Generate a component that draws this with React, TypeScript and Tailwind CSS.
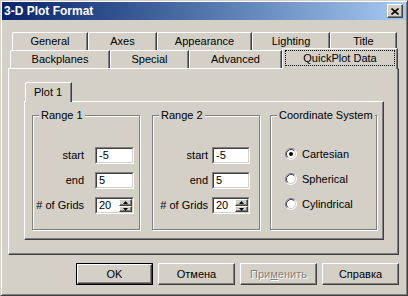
import type { ReactNode } from 'react'

const raised =
  'border border-t-white border-l-white border-r-[#404040] border-b-[#404040] shadow-[inset_-1px_-1px_0_#808080]'

const Tab = ({ label, width }: { label: string; width: number }) => (
  <div
    className="flex h-[18px] items-center justify-center rounded-tl-[2px] border-t border-l border-r border-t-white border-l-white border-r-[#404040] shadow-[inset_-1px_0_0_#808080]"
    style={{ width }}
  >
    {label}
  </div>
)

const Edit = ({ value, width, spin }: { value: string; width: number; spin?: boolean }) => (
  <div
    className="h-[17px] border border-t-[#808080] border-l-[#808080] border-b-white border-r-white"
    style={{ width }}
  >
    <div className="flex h-full items-center border border-t-[#404040] border-l-[#404040] border-b-[#d4d0c8] border-r-[#d4d0c8] bg-white">
      <span className="flex-1 pl-[2px] leading-none">{value}</span>
      {spin ? (
        <div className="flex h-full w-[13px] flex-col">
          <div className={`flex h-[7px] items-center justify-center bg-[#d4d0c8] ${raised}`}>
            <svg width="5" height="3" viewBox="0 0 5 3">
              <path d="M2.5 0 L5 3 L0 3 Z" fill="#000" />
            </svg>
          </div>
          <div className={`flex h-[6px] items-center justify-center bg-[#d4d0c8] ${raised}`}>
            <svg width="5" height="3" viewBox="0 0 5 3">
              <path d="M0 0 L5 0 L2.5 3 Z" fill="#000" />
            </svg>
          </div>
        </div>
      ) : null}
    </div>
  </div>
)

const Group = ({
  title,
  width,
  className,
  children,
}: {
  title: string
  width: number
  className?: string
  children: ReactNode
}) => (
  <div
    className={`relative h-[115px] border border-[#808080] shadow-[inset_1px_1px_0_#fff,1px_1px_0_#fff] ${className ?? ''}`}
    style={{ width }}
  >
    <span className="absolute left-[6px] top-[-8px] bg-[#d4d0c8] px-[2px] leading-[14px]">{title}</span>
    {children}
  </div>
)

const RangeFields = ({ labelCol, gap, inputWidth }: { labelCol: number; gap: number; inputWidth: number }) => (
  <div
    className="grid gap-y-[8px] pt-[31px]"
    style={{ gridTemplateColumns: `${labelCol}px ${inputWidth}px`, columnGap: gap }}
  >
    <span className="self-center text-right">start</span>
    <Edit value="-5" width={inputWidth} />
    <span className="self-center text-right">end</span>
    <Edit value="5" width={inputWidth} />
    <span className="self-center text-right whitespace-nowrap"># of Grids</span>
    <Edit value="20" width={inputWidth} spin />
  </div>
)

const Radio = ({ label, checked }: { label: string; checked?: boolean }) => (
  <div className="flex h-[12px] items-center gap-[5px]">
    <svg width="12" height="12" viewBox="0 0 12 12">
      <circle cx="6" cy="6" r="5" fill="#fff" />
      <path d="M2.11 9.89 A5.5 5.5 0 0 1 9.89 2.11" fill="none" stroke="#808080" />
      <path d="M9.89 2.11 A5.5 5.5 0 0 1 2.11 9.89" fill="none" stroke="#fff" />
      <path d="M2.82 9.18 A4.5 4.5 0 0 1 9.18 2.82" fill="none" stroke="#404040" />
      <path d="M9.18 2.82 A4.5 4.5 0 0 1 2.82 9.18" fill="none" stroke="#d4d0c8" />
      {checked ? <circle cx="6" cy="6" r="2" fill="#000" /> : null}
    </svg>
    <span className="leading-none">{label}</span>
  </div>
)

const Button = ({ children, isDefault, disabled }: { children: ReactNode; isDefault?: boolean; disabled?: boolean }) => (
  <div className={`h-[22px] w-[77px] ${isDefault ? 'border border-black' : ''}`}>
    <div
      className={`flex h-full items-center justify-center bg-[#d4d0c8] ${raised} ${
        disabled ? 'text-[#808080] [text-shadow:1px_1px_0_#fff]' : ''
      }`}
    >
      {children}
    </div>
  </div>
)

const App = () => {
  return (
    <div className="h-[296px] w-[408px] overflow-hidden border border-t-[#d4d0c8] border-l-[#d4d0c8] border-r-[#404040] border-b-[#404040] bg-[#d4d0c8] p-[1px] font-['Liberation_Sans',Arial,sans-serif] text-[11px] text-black shadow-[inset_1px_1px_0_#fff,inset_-1px_-1px_0_#808080]">
      <div className="flex h-[18px] items-center justify-between bg-linear-to-r from-[#0a246a] to-[#a6caf0] pl-[2px] pr-[3px]">
        <span className="text-[12px] font-bold text-white">3-D Plot Format</span>
        <div className={`flex h-[14px] w-[16px] items-center justify-center bg-[#d4d0c8] ${raised}`}>
          <svg width="8" height="7" viewBox="0 0 8 7">
            <path d="M0.5 0.5 L7.5 6.5 M7.5 0.5 L0.5 6.5" stroke="#000" strokeWidth="1.6" />
          </svg>
        </div>
      </div>

      <div className="pl-[6px] pr-[7px] pt-[12px]">
        <div className="ml-[4px] flex">
          <Tab label="General" width={76} />
          <Tab label="Axes" width={69} />
          <Tab label="Appearance" width={95} />
          <Tab label="Lighting" width={78} />
          <Tab label="Title" width={67} />
        </div>
        <div className="ml-[2px] flex h-[18px]">
          <Tab label="Backplanes" width={100} />
          <Tab label="Special" width={79} />
          <Tab label="Advanced" width={93} />
          <div className="relative z-10 -mt-[2px] flex h-[21px] w-[116px] rounded-tl-[2px] border-t border-l border-r border-t-white border-l-white border-r-[#404040] bg-[#d4d0c8] px-[2px] pt-[1px] shadow-[inset_-1px_0_0_#808080]">
            <div className="flex h-[16px] flex-1 items-center justify-center border border-dotted border-black">
              QuickPlot Data
            </div>
          </div>
        </div>

        <div className={`h-[187px] pl-[15px] pr-[14px] pt-[13px] ${raised}`}>
          <div className="ml-[1px] flex h-[19px]">
            <div className="relative z-10 flex h-[20px] w-[47px] items-center rounded-tl-[2px] border-t border-l border-r border-t-white border-l-white border-r-[#404040] bg-[#d4d0c8] pl-[8px] shadow-[inset_-1px_0_0_#808080]">
              Plot 1
            </div>
          </div>
          <div className={`flex h-[139px] pl-[7px] pt-[13px] ${raised}`}>
            <Group title="Range 1" width={108}>
              <div className="pl-[1px]">
                <RangeFields labelCol={50} gap={11} inputWidth={39} />
              </div>
            </Group>
            <Group title="Range 2" width={108} className="ml-[12px]">
              <RangeFields labelCol={55} gap={4} inputWidth={38} />
            </Group>
            <Group title="Coordinate System" width={107} className="ml-[10px]">
              <div className="flex flex-col gap-[13px] pl-[14px] pt-[32px]">
                <Radio label="Cartesian" checked />
                <Radio label="Spherical" />
                <Radio label="Cylindrical" />
              </div>
            </Group>
          </div>
        </div>

        <div className="mt-[8px] flex justify-end gap-[5px]">
          <Button isDefault>OK</Button>
          <Button>Отмена</Button>
          <Button disabled>
            При<span className="underline">м</span>енить
          </Button>
          <Button>Справка</Button>
        </div>
      </div>
    </div>
  )
}

export default App
